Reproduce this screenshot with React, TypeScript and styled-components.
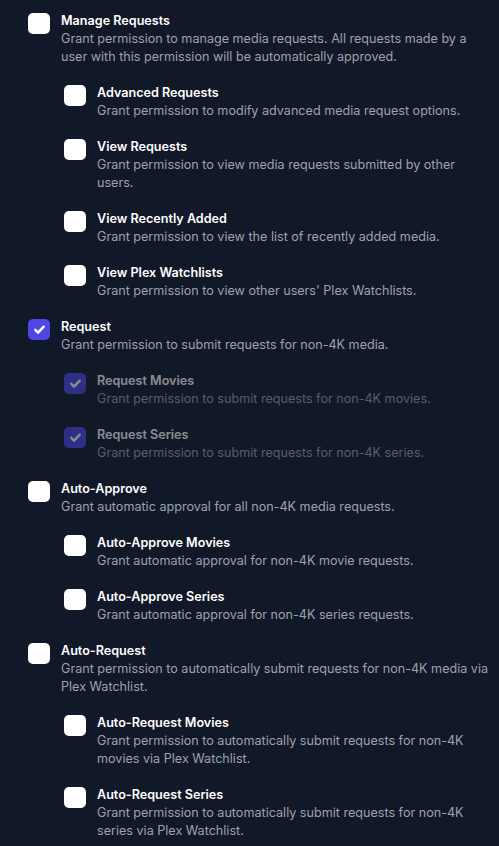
import styled, { createGlobalStyle } from 'styled-components';

const GlobalStyle = createGlobalStyle`
  html, body {
    margin: 0;
    padding: 0;
    background: #111827;
  }
  body {
    font-family: Inter, "Noto Sans", "Liberation Sans", sans-serif;
    -webkit-font-smoothing: antialiased;
  }
`;

const List = styled.div`
  display: flex;
  flex-direction: column;
  gap: 18px;
  padding: 12px 8px 12px 28px;
  min-height: 846px;
  box-sizing: border-box;
`;

const Row = styled.label<{ $level: number; $disabled?: boolean }>`
  display: flex;
  align-items: flex-start;
  gap: 11px;
  padding-left: ${(p) => p.$level * 36}px;
  opacity: ${(p) => (p.$disabled ? 0.5 : 1)};
`;

const Box = styled.span<{ $checked?: boolean }>`
  flex: none;
  width: 22px;
  height: 21px;
  margin-top: 1px;
  border-radius: 5px;
  background: ${(p) => (p.$checked ? '#4f46e5' : '#ffffff')};
  display: flex;
  align-items: center;
  justify-content: center;
`;

const Texts = styled.div`
  display: flex;
  flex-direction: column;
  font-size: 12.6px;
  line-height: 18px;
`;

const Title = styled.span`
  color: #ffffff;
  font-weight: 600;
`;

const Desc = styled.span`
  color: #9ca3af;
  font-weight: 400;
`;

interface Permission {
  title: string;
  desc: string;
  level: number;
  checked?: boolean;
  disabled?: boolean;
}

const permissions: Permission[] = [
  {
    title: 'Manage Requests',
    desc: 'Grant permission to manage media requests. All requests made by a user with this permission will be automatically approved.',
    level: 0,
  },
  {
    title: 'Advanced Requests',
    desc: 'Grant permission to modify advanced media request options.',
    level: 1,
  },
  {
    title: 'View Requests',
    desc: 'Grant permission to view media requests submitted by other users.',
    level: 1,
  },
  {
    title: 'View Recently Added',
    desc: 'Grant permission to view the list of recently added media.',
    level: 1,
  },
  {
    title: 'View Plex Watchlists',
    desc: "Grant permission to view other users' Plex Watchlists.",
    level: 1,
  },
  {
    title: 'Request',
    desc: 'Grant permission to submit requests for non-4K media.',
    level: 0,
    checked: true,
  },
  {
    title: 'Request Movies',
    desc: 'Grant permission to submit requests for non-4K movies.',
    level: 1,
    checked: true,
    disabled: true,
  },
  {
    title: 'Request Series',
    desc: 'Grant permission to submit requests for non-4K series.',
    level: 1,
    checked: true,
    disabled: true,
  },
  {
    title: 'Auto-Approve',
    desc: 'Grant automatic approval for all non-4K media requests.',
    level: 0,
  },
  {
    title: 'Auto-Approve Movies',
    desc: 'Grant automatic approval for non-4K movie requests.',
    level: 1,
  },
  {
    title: 'Auto-Approve Series',
    desc: 'Grant automatic approval for non-4K series requests.',
    level: 1,
  },
  {
    title: 'Auto-Request',
    desc: 'Grant permission to automatically submit requests for non-4K media via Plex Watchlist.',
    level: 0,
  },
  {
    title: 'Auto-Request Movies',
    desc: 'Grant permission to automatically submit requests for non-4K movies via Plex Watchlist.',
    level: 1,
  },
  {
    title: 'Auto-Request Series',
    desc: 'Grant permission to automatically submit requests for non-4K series via Plex Watchlist.',
    level: 1,
  },
];

function CheckMark() {
  return (
    <svg width="15" height="15" viewBox="0 0 16 16" fill="none">
      <path
        d="M3.5 8.3l3 3 6-6.3"
        stroke="#ffffff"
        strokeWidth="2.6"
        strokeLinecap="round"
        strokeLinejoin="round"
      />
    </svg>
  );
}

function App() {
  return (
    <>
      <GlobalStyle />
      <List>
        {permissions.map((p) => (
          <Row key={p.title} $level={p.level} $disabled={p.disabled}>
            <Box $checked={p.checked}>{p.checked && <CheckMark />}</Box>
            <Texts>
              <Title>{p.title}</Title>
              <Desc>{p.desc}</Desc>
            </Texts>
          </Row>
        ))}
      </List>
    </>
  );
}

export default App;
